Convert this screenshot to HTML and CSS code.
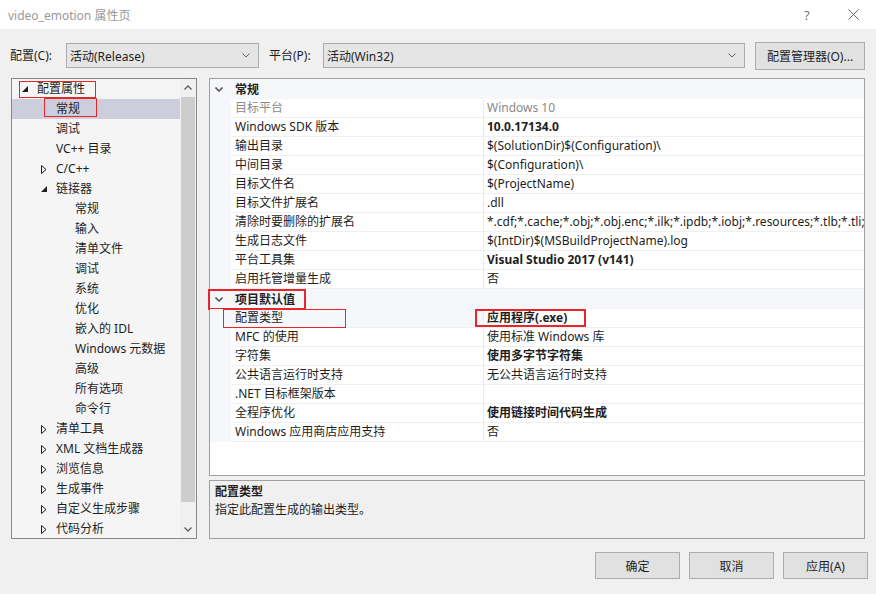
FILE: index.html
```html
<!DOCTYPE html>
<html lang="zh-CN">
<head>
  <meta charset="UTF-8">
  <title>video_emotion 属性页</title>
  <link rel="stylesheet" href="styles.css">
</head>
<body>
  <div class="titlebar">
    <span class="title">video_emotion 属性页</span>
    <span class="tb-help">?</span>
    <span class="tb-close"><svg width="11" height="11" viewBox="0 0 11 11"><path d="M0.5 0.5L10.5 10.5M10.5 0.5L0.5 10.5" stroke="#666" fill="none"/></svg></span>
  </div>

  <div class="toolbar">
    <label class="lbl-config">配置(C):</label>
    <div class="combo combo-config">活动(Release)<svg width="8" height="5" viewBox="0 0 8 5"><polyline points="0.5,0.5 4,4 7.5,0.5" stroke="#606060" fill="none"/></svg></div>
    <label class="lbl-platform">平台(P):</label>
    <div class="combo combo-platform">活动(Win32)<svg width="8" height="5" viewBox="0 0 8 5"><polyline points="0.5,0.5 4,4 7.5,0.5" stroke="#606060" fill="none"/></svg></div>
    <button class="btn btn-mgr">配置管理器(O)...</button>
  </div>

  <div class="main">
    <div class="tree">
      <div class="tree-list">
        <div class="node l1"><span class="tw"><svg width="6" height="6" viewBox="0 0 6 6"><path d="M6 0V6H0Z" fill="#1e1e1e"/></svg></span>配置属性<span class="mark m-root"></span></div>
        <div class="node l2 sel"><span class="tw"></span>常规<span class="mark m-general"></span></div>
        <div class="node l2"><span class="tw"></span>调试</div>
        <div class="node l2"><span class="tw"></span>VC++ 目录</div>
        <div class="node l2"><span class="tw"><svg width="6" height="9" viewBox="0 0 6 9"><path d="M0.5 0.5L5 4.5L0.5 8.5Z" fill="none" stroke="#1e1e1e"/></svg></span>C/C++</div>
        <div class="node l2"><span class="tw"><svg width="6" height="6" viewBox="0 0 6 6"><path d="M6 0V6H0Z" fill="#1e1e1e"/></svg></span>链接器</div>
        <div class="node l3"><span class="tw"></span>常规</div>
        <div class="node l3"><span class="tw"></span>输入</div>
        <div class="node l3"><span class="tw"></span>清单文件</div>
        <div class="node l3"><span class="tw"></span>调试</div>
        <div class="node l3"><span class="tw"></span>系统</div>
        <div class="node l3"><span class="tw"></span>优化</div>
        <div class="node l3"><span class="tw"></span>嵌入的 IDL</div>
        <div class="node l3"><span class="tw"></span>Windows 元数据</div>
        <div class="node l3"><span class="tw"></span>高级</div>
        <div class="node l3"><span class="tw"></span>所有选项</div>
        <div class="node l3"><span class="tw"></span>命令行</div>
        <div class="node l2"><span class="tw"><svg width="6" height="9" viewBox="0 0 6 9"><path d="M0.5 0.5L5 4.5L0.5 8.5Z" fill="none" stroke="#1e1e1e"/></svg></span>清单工具</div>
        <div class="node l2"><span class="tw"><svg width="6" height="9" viewBox="0 0 6 9"><path d="M0.5 0.5L5 4.5L0.5 8.5Z" fill="none" stroke="#1e1e1e"/></svg></span>XML 文档生成器</div>
        <div class="node l2"><span class="tw"><svg width="6" height="9" viewBox="0 0 6 9"><path d="M0.5 0.5L5 4.5L0.5 8.5Z" fill="none" stroke="#1e1e1e"/></svg></span>浏览信息</div>
        <div class="node l2"><span class="tw"><svg width="6" height="9" viewBox="0 0 6 9"><path d="M0.5 0.5L5 4.5L0.5 8.5Z" fill="none" stroke="#1e1e1e"/></svg></span>生成事件</div>
        <div class="node l2"><span class="tw"><svg width="6" height="9" viewBox="0 0 6 9"><path d="M0.5 0.5L5 4.5L0.5 8.5Z" fill="none" stroke="#1e1e1e"/></svg></span>自定义生成步骤</div>
        <div class="node l2"><span class="tw"><svg width="6" height="9" viewBox="0 0 6 9"><path d="M0.5 0.5L5 4.5L0.5 8.5Z" fill="none" stroke="#1e1e1e"/></svg></span>代码分析</div>
      </div>
      <div class="vscroll">
        <div class="sb-btn"><svg width="8" height="5" viewBox="0 0 8 5"><polyline points="0.5,4.5 4,1 7.5,4.5" stroke="#606060" stroke-width="1.4" fill="none"/></svg></div>
        <div class="sb-track"><div class="sb-thumb"></div></div>
        <div class="sb-btn"><svg width="8" height="5" viewBox="0 0 8 5"><polyline points="0.5,0.5 4,4 7.5,0.5" stroke="#606060" stroke-width="1.4" fill="none"/></svg></div>
      </div>
    </div>

    <div class="right">
      <div class="grid">
        <div class="cat"><span class="chev"><svg width="8" height="5" viewBox="0 0 8 5"><polyline points="0.5,0.5 4,4 7.5,0.5" stroke="#5a5a5a" stroke-width="1.6" fill="none"/></svg></span>常规</div>
        <div class="prop"><div class="name dim">目标平台</div><div class="val dim">Windows 10</div></div>
        <div class="prop"><div class="name">Windows SDK 版本</div><div class="val b">10.0.17134.0</div></div>
        <div class="prop"><div class="name">输出目录</div><div class="val">$(SolutionDir)$(Configuration)\</div></div>
        <div class="prop"><div class="name">中间目录</div><div class="val">$(Configuration)\</div></div>
        <div class="prop"><div class="name">目标文件名</div><div class="val">$(ProjectName)</div></div>
        <div class="prop"><div class="name">目标文件扩展名</div><div class="val">.dll</div></div>
        <div class="prop"><div class="name">清除时要删除的扩展名</div><div class="val">*.cdf;*.cache;*.obj;*.obj.enc;*.ilk;*.ipdb;*.iobj;*.resources;*.tlb;*.tli;*.tlh;*.tmp;*.rsp</div></div>
        <div class="prop"><div class="name">生成日志文件</div><div class="val">$(IntDir)$(MSBuildProjectName).log</div></div>
        <div class="prop"><div class="name">平台工具集</div><div class="val b">Visual Studio 2017 (v141)</div></div>
        <div class="prop"><div class="name">启用托管增量生成</div><div class="val">否</div></div>
        <div class="cat"><span class="chev"><svg width="8" height="5" viewBox="0 0 8 5"><polyline points="0.5,0.5 4,4 7.5,0.5" stroke="#5a5a5a" stroke-width="1.6" fill="none"/></svg></span>项目默认值<span class="mark m-cat"></span></div>
        <div class="prop sel"><div class="name">配置类型</div><div class="val b">应用程序(.exe)</div><span class="mark m-name"></span><span class="mark m-val"></span></div>
        <div class="prop"><div class="name">MFC 的使用</div><div class="val">使用标准 Windows 库</div></div>
        <div class="prop"><div class="name">字符集</div><div class="val b">使用多字节字符集</div></div>
        <div class="prop"><div class="name">公共语言运行时支持</div><div class="val">无公共语言运行时支持</div></div>
        <div class="prop"><div class="name">.NET 目标框架版本</div><div class="val"></div></div>
        <div class="prop"><div class="name">全程序优化</div><div class="val b">使用链接时间代码生成</div></div>
        <div class="prop"><div class="name">Windows 应用商店应用支持</div><div class="val">否</div></div>
      </div>
      <div class="desc">
        <div class="b">配置类型</div>
        <div>指定此配置生成的输出类型。</div>
      </div>
    </div>
  </div>

  <div class="footer">
    <button class="btn">确定</button>
    <button class="btn">取消</button>
    <button class="btn">应用(A)</button>
  </div>
</body>
</html>
```

FILE: styles.css
```css
* {
  box-sizing: border-box;
}
body {
  margin: 0;
  width: 876px;
  height: 594px;
  overflow: hidden;
  background: #f0f0f0;
  color: #1e1e1e;
  font-family: "Noto Sans", "Noto Sans CJK SC", sans-serif;
  font-size: 12px;
}
.titlebar {
  height: 29px;
  background: #fff;
  display: flex;
  align-items: center;
  padding-left: 8px;
  color: #999;
}
.titlebar .title {
  flex: 1;
}
.tb-help {
  width: 8px;
  margin-right: 36px;
  font-size: 13px;
  color: #777;
}
.tb-close {
  display: flex;
  margin-right: 17px;
}
.toolbar {
  height: 49px;
  display: flex;
  align-items: flex-start;
  padding: 14px 0 0 10px;
}
.toolbar label {
  line-height: 25px;
}
.lbl-config {
  width: 56px;
}
.lbl-platform {
  width: 54px;
  margin-left: 10px;
}
.combo {
  height: 25px;
  border: 1px solid #acacac;
  background: #e5e5e5;
  display: flex;
  align-items: center;
  justify-content: space-between;
  padding: 0 8px 0 3px;
}
.combo-config {
  width: 193px;
}
.combo-platform {
  width: 422px;
}
.btn {
  border: 1px solid #adadad;
  background: #e1e1e1;
  color: #1e1e1e;
  font: inherit;
  padding: 0;
}
.btn-mgr {
  width: 110px;
  height: 28px;
  margin: -1px 0 0 10px;
}
.main {
  display: flex;
  height: 461px;
  padding-left: 11px;
}
.tree {
  width: 186px;
  border: 1px solid #828790;
  background: #f5f5f5;
  display: flex;
  overflow: hidden;
}
.tree-list {
  flex: 1;
}
.node {
  position: relative;
  height: 20px;
  line-height: 20px;
  display: flex;
  align-items: center;
  white-space: nowrap;
}
.node.sel {
  background: #cccedb;
}
.tw {
  width: 15px;
  flex: none;
  display: flex;
  align-items: center;
}
.l1 {
  padding-left: 10px;
}
.l2 {
  padding-left: 29px;
}
.l3 {
  padding-left: 48px;
}
.vscroll {
  width: 16px;
  display: flex;
  flex-direction: column;
  background: #f0f0f0;
}
.sb-btn {
  height: 17px;
  display: flex;
  align-items: center;
  justify-content: center;
}
.sb-track {
  flex: 1;
  padding: 1px 1px 0;
}
.sb-thumb {
  height: 405px;
  background: #cdcdcd;
}
.right {
  width: 656px;
  margin-left: 12px;
  display: flex;
  flex-direction: column;
  gap: 4px;
}
.grid {
  height: 398px;
  border: 1px solid #a0a0a0;
  background: #fff;
}
.cat {
  position: relative;
  height: 20px;
  display: flex;
  align-items: center;
  background: #f5f7fb;
  font-weight: bold;
}
.chev {
  width: 25px;
  padding-left: 5px;
  display: flex;
}
.prop {
  position: relative;
  height: 19px;
  display: flex;
  background: #f5f7fb;
  line-height: 18px;
  white-space: nowrap;
}
.prop .name {
  width: 253px;
  margin-left: 21px;
  padding-left: 4px;
  background: #fff;
  border-bottom: 1px solid #f0f0f0;
  border-right: 1px solid #ececec;
}
.prop .val {
  flex: 1;
  padding-left: 3px;
  background: #fff;
  border-bottom: 1px solid #f0f0f0;
  overflow: hidden;
}
.prop.sel .name {
  background: #f5f7fb;
}
.dim {
  color: #8a8a8a;
}
.b {
  font-weight: bold;
}
.desc {
  height: 59px;
  border: 1px solid #a0a0a0;
  padding: 2px 5px;
  line-height: 18px;
}
.mark {
  position: absolute;
  border: 1px solid #e8262a;
}
.m-root {
  left: 7px;
  top: 2px;
  width: 77px;
  height: 17px;
}
.m-general {
  left: 32px;
  top: -1px;
  width: 53px;
  height: 19px;
}
.m-cat {
  left: -2px;
  top: 0;
  width: 98px;
  height: 21px;
  border-width: 2px;
}
.m-name {
  left: 13px;
  top: 0;
  width: 123px;
  height: 19px;
}
.m-val {
  left: 265px;
  top: 0;
  width: 111px;
  height: 18px;
  border-width: 2px;
}
.footer {
  display: flex;
  justify-content: flex-end;
  gap: 9px;
  padding: 13px 8px 0 0;
}
.footer .btn {
  width: 85px;
  height: 27px;
}
```
